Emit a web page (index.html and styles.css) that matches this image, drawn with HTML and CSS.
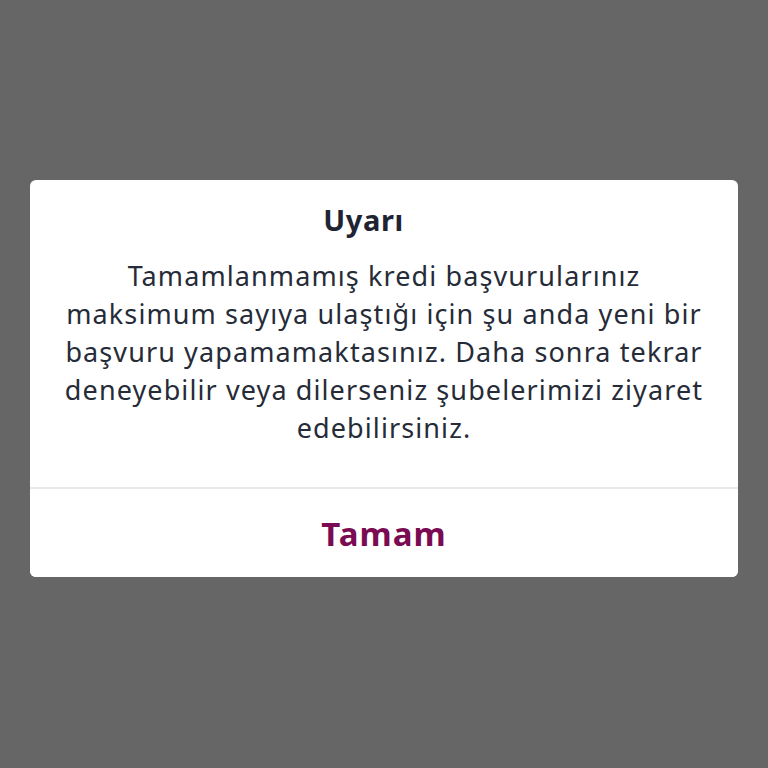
FILE: index.html
```html
<!DOCTYPE html>
<html lang="tr">
<head>
    <meta charset="UTF-8">
    <meta name="viewport" content="width=device-width, initial-scale=1.0">
    <title>Uyarı</title>
    <link rel="stylesheet" href="styles.css">
</head>
<body>
    <div class="overlay">
        <div class="dialog">
            <div class="dialog-body">
                <h2 class="dialog-title">Uyarı</h2>
                <p class="dialog-text">Tamamlanmamış kredi başvurularınız<br>maksimum sayıya ulaştığı için şu anda yeni bir<br>başvuru yapamamaktasınız. Daha sonra tekrar<br>deneyebilir veya dilerseniz şubelerimizi ziyaret<br>edebilirsiniz.</p>
            </div>
            <button class="dialog-button">Tamam</button>
        </div>
    </div>
</body>
</html>
```

FILE: styles.css
```css
html, body {
    margin: 0;
    height: 100%;
}

body {
    background: #666666;
    font-family: "Noto Sans", sans-serif;
}

.overlay {
    height: 100%;
    display: flex;
    align-items: center;
    justify-content: center;
}

.dialog {
    width: 708px;
    margin-top: -11px;
    background: #fff;
    border-radius: 6px;
    overflow: hidden;
}

.dialog-body {
    padding: 23px 10px 40px;
    text-align: center;
    border-bottom: 2px solid #e9e9ec;
}

.dialog-title {
    margin: 0 0 20px;
    padding-right: 41px;
    font-size: 29px;
    font-weight: 700;
    letter-spacing: 0.6px;
    color: #1f2433;
    line-height: 34px;
}

.dialog-text {
    margin: 0;
    font-size: 27px;
    letter-spacing: 1.1px;
    line-height: 38px;
    color: #262b38;
    white-space: nowrap;
}

.dialog-button {
    display: block;
    width: 100%;
    height: 88px;
    border: none;
    background: #fff;
    font-family: inherit;
    font-size: 33px;
    font-weight: 700;
    letter-spacing: 1px;
    color: #7a0b52;
    cursor: pointer;
}
```
